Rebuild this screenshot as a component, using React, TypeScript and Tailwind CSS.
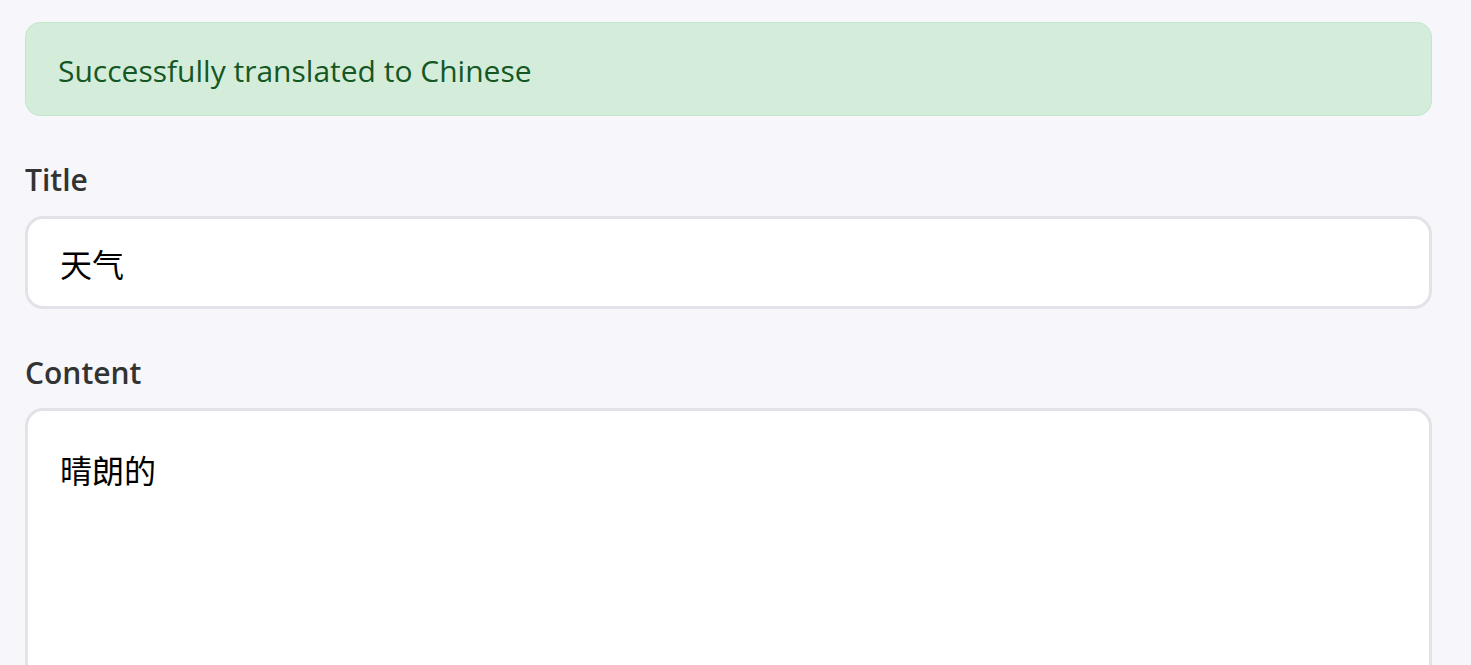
import { useState } from "react";

export default function App() {
  const [title, setTitle] = useState("天气");
  const [content, setContent] = useState("晴朗的");

  return (
    <div
      className="min-h-screen bg-[#f7f7fb] pl-[25px] pr-[39px] pt-[22px] pb-10"
      style={{ fontFamily: '"Open Sans", "Noto Sans CJK SC", sans-serif' }}
    >
      <div className="flex h-[94px] items-center rounded-[15px] border border-[#c3e6cb] bg-[#d4edda] px-[32px] pt-[3px] text-[30px] text-[#155724]">
        Successfully translated to Chinese
      </div>

      <div className="mt-[46px] flex flex-col">
        <label className="mb-[18px] text-[30px] font-semibold leading-[36px] text-[#333]">
          Title
        </label>
        <input
          value={title}
          onChange={(e) => setTitle(e.target.value)}
          className="h-[93px] rounded-[18px] border-[3px] border-[#e2e2e8] bg-white px-[32px] text-[32px] text-black outline-none"
        />
      </div>

      <div className="mt-[46px] flex flex-col">
        <label className="mb-[17px] text-[30px] font-semibold leading-[36px] text-[#333]">
          Content
        </label>
        <textarea
          value={content}
          onChange={(e) => setContent(e.target.value)}
          className="h-[320px] resize-none rounded-[18px] border-[3px] border-[#e2e2e8] bg-white px-[32px] pt-[38px] text-[32px] leading-[44px] text-black outline-none"
        />
      </div>
    </div>
  );
}
